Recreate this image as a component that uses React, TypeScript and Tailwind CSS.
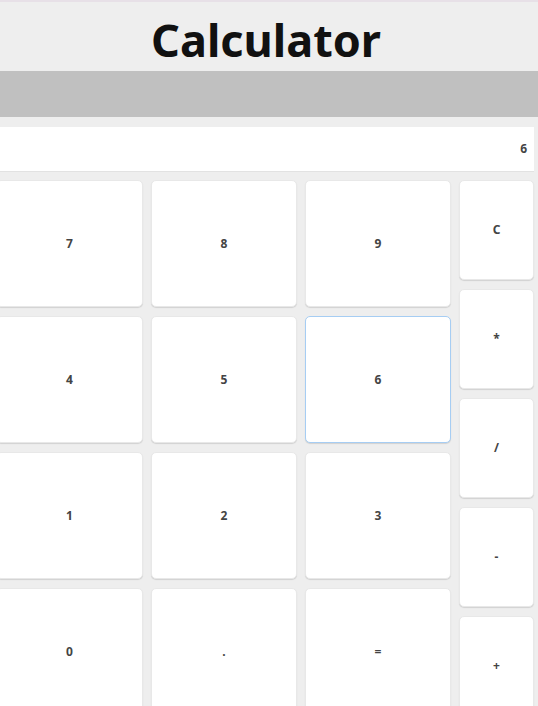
import React, { useState } from 'react';

const digits = ['7', '8', '9', '4', '5', '6', '1', '2', '3', '0', '.', '='];
const ops = ['C', '*', '/', '-', '+'];

function App() {
  const [display, setDisplay] = useState('6');
  const [active, setActive] = useState('6');

  const press = (k: string) => {
    setActive(k);
    if (k === 'C') return setDisplay('');
    if (k === '=') {
      try {
        // eslint-disable-next-line no-new-func
        setDisplay(String(Function(`return (${display || 0})`)()));
      } catch {
        setDisplay('Error');
      }
      return;
    }
    setDisplay((d) => d + k);
  };

  return (
    <div
      className="min-h-screen overflow-hidden bg-[#eeeeee] border-t-[2px] border-[#e7e0e7]"
      style={{ fontFamily: '"Noto Sans", "DejaVu Sans", sans-serif' }}
    >
      {/* Header */}
      <header className="h-[69px] flex items-center justify-center">
        <h1 className="text-[45px] font-bold text-[#111] leading-none pt-[6px] pr-[6px]">Calculator</h1>
      </header>
      <div className="h-[46px] bg-[#c0c0c0]" />

      <div className="ml-[-4px] w-[538px] mt-[10px]">
        {/* Display */}
        <div className="h-[45px] bg-white border-b border-[#e2e2e2] flex items-center justify-end pr-[7px] text-[12px] font-bold text-[#444]">
          {display}
        </div>

        {/* Keypad */}
        <div className="flex gap-x-[8px] mt-[8px]">
          <div className="grid grid-cols-[147px_146px_146px] auto-rows-[127px] gap-x-[8px] gap-y-[9px]">
            {digits.map((k) => (
              <button
                key={k}
                onClick={() => press(k)}
                className={
                  'bg-white rounded-[5px] flex items-center justify-center text-[12px] font-bold text-[#444] shadow-[0_1px_1px_rgba(0,0,0,0.12)] ' +
                  (active === k ? 'border-[1.5px] border-[#a6cdf3]' : 'border border-[#e8e8e8]')
                }
              >
                {k}
              </button>
            ))}
          </div>
          <div className="flex flex-col gap-y-[9px] w-[75px]">
            {ops.map((k) => (
              <button
                key={k}
                onClick={() => press(k)}
                className="h-[100px] shrink-0 bg-white rounded-[5px] border border-[#e8e8e8] flex items-center justify-center text-[12px] font-bold text-[#444] shadow-[0_1px_1px_rgba(0,0,0,0.12)]"
              >
                {k}
              </button>
            ))}
          </div>
        </div>
      </div>
    </div>
  );
}

export default App;
